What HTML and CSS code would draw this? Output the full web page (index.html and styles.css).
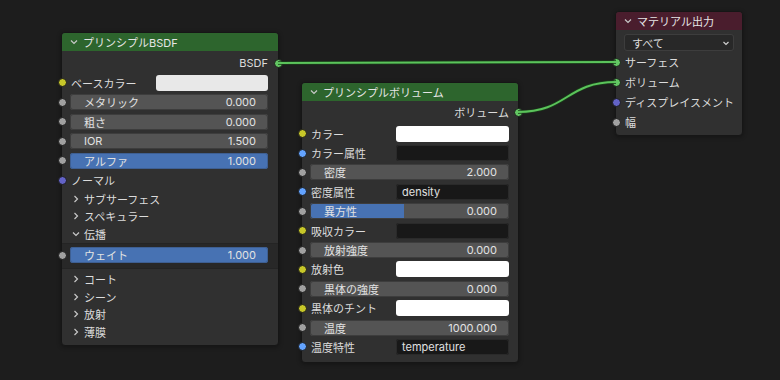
FILE: index.html
```html
<!DOCTYPE html>
<html lang="ja">
<head>
    <meta charset="UTF-8">
    <title>Shader Nodes</title>
    <link rel="stylesheet" href="styles.css">
</head>
<body>
<div class="canvas">
    <svg class="wires" width="780" height="380" viewBox="0 0 780 380">
        <path class="wire-edge" d="M278 63 L616 62"/>
        <path class="wire" d="M278 63 L616 62"/>
        <path class="wire-edge" d="M518 112 C568 112 566 82 616 82"/>
        <path class="wire" d="M518 112 C568 112 566 82 616 82"/>
    </svg>

    <!-- Principled BSDF -->
    <div class="node node-bsdf">
        <div class="node-head shader">
            <svg class="chev" viewBox="0 0 10 10"><path d="M2 3.5 L5 6.5 L8 3.5"/></svg>
            <span>プリンシプルBSDF</span>
        </div>
        <div class="node-body">
            <div class="row out">BSDF<span class="sock out-sock green"></span></div>
            <div class="row"><span class="sock yellow"></span><span class="lbl">ベースカラー</span><span class="swatch light"></span></div>
            <div class="row"><span class="sock grey"></span><div class="slider"><span>メタリック</span><span>0.000</span></div></div>
            <div class="row"><span class="sock grey"></span><div class="slider"><span>粗さ</span><span>0.000</span></div></div>
            <div class="row"><span class="sock grey"></span><div class="slider"><span>IOR</span><span>1.500</span></div></div>
            <div class="row"><span class="sock grey"></span><div class="slider full"><span>アルファ</span><span>1.000</span></div></div>
            <div class="row"><span class="sock purple"></span><span class="lbl">ノーマル</span></div>
            <div class="panel"><svg class="chev" viewBox="0 0 10 10"><path d="M3.5 2 L6.5 5 L3.5 8"/></svg>サブサーフェス</div>
            <div class="panel"><svg class="chev" viewBox="0 0 10 10"><path d="M3.5 2 L6.5 5 L3.5 8"/></svg>スペキュラー</div>
            <div class="panel"><svg class="chev" viewBox="0 0 10 10"><path d="M2 3.5 L5 6.5 L8 3.5"/></svg>伝播</div>
            <div class="panel-box">
                <div class="row"><span class="sock grey"></span><div class="slider full"><span>ウェイト</span><span>1.000</span></div></div>
            </div>
            <div class="panel gap"><svg class="chev" viewBox="0 0 10 10"><path d="M3.5 2 L6.5 5 L3.5 8"/></svg>コート</div>
            <div class="panel"><svg class="chev" viewBox="0 0 10 10"><path d="M3.5 2 L6.5 5 L3.5 8"/></svg>シーン</div>
            <div class="panel"><svg class="chev" viewBox="0 0 10 10"><path d="M3.5 2 L6.5 5 L3.5 8"/></svg>放射</div>
            <div class="panel"><svg class="chev" viewBox="0 0 10 10"><path d="M3.5 2 L6.5 5 L3.5 8"/></svg>薄膜</div>
        </div>
    </div>

    <!-- Principled Volume -->
    <div class="node node-volume">
        <div class="node-head shader">
            <svg class="chev" viewBox="0 0 10 10"><path d="M2 3.5 L5 6.5 L8 3.5"/></svg>
            <span>プリンシプルボリューム</span>
        </div>
        <div class="node-body">
            <div class="row out">ボリューム<span class="sock out-sock green"></span></div>
            <div class="row first"><span class="sock yellow"></span><span class="lbl">カラー</span><span class="swatch"></span></div>
            <div class="row"><span class="sock blue"></span><span class="lbl">カラー属性</span><span class="text-field"></span></div>
            <div class="row"><span class="sock grey"></span><div class="slider"><span>密度</span><span>2.000</span></div></div>
            <div class="row"><span class="sock blue"></span><span class="lbl">密度属性</span><span class="text-field">density</span></div>
            <div class="row"><span class="sock grey"></span><div class="slider" style="--fill: 47%"><span>異方性</span><span>0.000</span></div></div>
            <div class="row"><span class="sock yellow"></span><span class="lbl">吸収カラー</span><span class="swatch dark"></span></div>
            <div class="row"><span class="sock grey"></span><div class="slider"><span>放射強度</span><span>0.000</span></div></div>
            <div class="row"><span class="sock yellow"></span><span class="lbl">放射色</span><span class="swatch"></span></div>
            <div class="row"><span class="sock grey"></span><div class="slider"><span>黒体の強度</span><span>0.000</span></div></div>
            <div class="row"><span class="sock yellow"></span><span class="lbl">黒体のチント</span><span class="swatch"></span></div>
            <div class="row"><span class="sock grey"></span><div class="slider"><span>温度</span><span>1000.000</span></div></div>
            <div class="row"><span class="sock blue"></span><span class="lbl">温度特性</span><span class="text-field">temperature</span></div>
        </div>
    </div>

    <!-- Material Output -->
    <div class="node node-output">
        <div class="node-head output">
            <svg class="chev" viewBox="0 0 10 10"><path d="M2 3.5 L5 6.5 L8 3.5"/></svg>
            <span>マテリアル出力</span>
        </div>
        <div class="node-body">
            <div class="dropdown"><span>すべて</span><svg class="chev small" viewBox="0 0 10 10"><path d="M2.5 4 L5 6.5 L7.5 4"/></svg></div>
            <div class="row"><span class="sock green"></span><span class="lbl">サーフェス</span></div>
            <div class="row"><span class="sock green"></span><span class="lbl">ボリューム</span></div>
            <div class="row"><span class="sock purple"></span><span class="lbl">ディスプレイスメント</span></div>
            <div class="row"><span class="sock grey"></span><span class="lbl">幅</span></div>
        </div>
    </div>
</div>
</body>
</html>
```

FILE: styles.css
```css
body {
    margin: 0;
    background-color: #1d1d1d;
    font-family: Inter, "Noto Sans CJK JP", sans-serif;
    font-size: 11px;
    color: #dcdcdc;
}
.canvas {
    position: relative;
    width: 780px;
    height: 380px;
    overflow: hidden;
}
.wires {
    position: absolute;
    left: 0;
    top: 0;
    z-index: 2;
    pointer-events: none;
}
.wire-edge {
    fill: none;
    stroke: #1a3d1a;
    stroke-width: 3.5;
}
.wire {
    fill: none;
    stroke: #5bc35b;
    stroke-width: 2;
}

/* nodes */
.node {
    position: absolute;
    background-color: #303030;
    border: 1px solid #161616;
    border-radius: 4px;
    box-shadow: 0 1px 4px rgba(0,0,0,0.35);
    z-index: 1;
}
.node-bsdf { left: 61px; top: 32px; width: 216px; }
.node-volume { left: 301px; top: 82px; width: 216px; }
.node-output { left: 615px; top: 11px; width: 126px; }

.node-head {
    height: 18px;
    display: flex;
    align-items: center;
    gap: 4px;
    padding-left: 7px;
    border-radius: 3px 3px 0 0;
    color: #e6e6e6;
}
.node-head.shader { background-color: #2d652d; }
.node-head.output { background-color: #4a1d2d; }

.chev {
    width: 10px;
    height: 10px;
    flex: none;
}
.chev path {
    fill: none;
    stroke: #c8c8c8;
    stroke-width: 1.2;
}
.chev.small path { stroke: #d0d0d0; }

.node-body {
    padding: 2px 10px 4px 8px;
}
.node-volume .node-body { padding: 1px 9px 5px 8px; }
.node-output .node-body { padding: 4px 8px 3px 8px; }

.row {
    position: relative;
    height: 19.5px;
    display: flex;
    align-items: center;
}
.node-volume .row { height: 19.4px; }
.node-output .row { height: 20px; }
.row.out {
    justify-content: flex-end;
    height: 20px;
}
.node-volume .row.out { height: 20px; margin-bottom: 2px; }
.lbl {
    width: 85px;
    flex: none;
    padding-left: 1px;
    white-space: nowrap;
}

/* sockets */
.sock {
    position: absolute;
    left: -12px;
    top: 50%;
    width: 7px;
    height: 7px;
    margin-top: -4.5px;
    border-radius: 50%;
    border: 1px solid #1a1a1a;
}
.sock.out-sock { left: auto; right: -14.5px; }
.node-volume .sock.out-sock { right: -13.5px; }
.sock.green { background-color: #63c763; }
.sock.yellow { background-color: #c7c729; }
.sock.grey { background-color: #a1a1a1; }
.sock.purple { background-color: #6363c7; }
.sock.blue { background-color: #63a3ff; }

/* fields */
.slider {
    flex: 1;
    height: 16px;
    display: flex;
    justify-content: space-between;
    align-items: center;
    padding: 0 12px 0 14px;
    border-radius: 3px;
    background: linear-gradient(to right, #4772b3 var(--fill, 0%), #545454 var(--fill, 0%));
    color: #e2e2e2;
    box-shadow: inset 0 0 0 1px #3d3d3d;
}
.slider.full { background: #4772b3; box-shadow: inset 0 0 0 1px #3e5f92; }
.swatch {
    flex: 1;
    height: 16px;
    border-radius: 3px;
    background-color: #ffffff;
}
.swatch.light { background-color: #e8e8e8; }
.swatch.dark, .text-field {
    background-color: #181818;
    box-shadow: inset 0 0 0 1px #2a2a2a;
}
.text-field {
    flex: 1;
    height: 16px;
    border-radius: 3px;
    padding-left: 6px;
    line-height: 16px;
    color: #e0e0e0;
}

/* collapsible panels */
.panel {
    height: 17.5px;
    display: flex;
    align-items: center;
    gap: 3px;
    padding-left: 1px;
}
.panel.gap { margin-top: 2px; }
.panel-box {
    margin: 0 -10px 0 -8px;
    padding: 2px 10px 2.5px 8px;
    background-color: #282828;
    border-top: 1px solid #242424;
    border-bottom: 1px solid #242424;
}

.dropdown {
    height: 17px;
    display: flex;
    justify-content: space-between;
    align-items: center;
    padding: 0 3px 0 8px;
    margin-bottom: 1px;
    background-color: #282828;
    border-radius: 3px;
    box-shadow: inset 0 0 0 1px #3d3d3d;
}
```
